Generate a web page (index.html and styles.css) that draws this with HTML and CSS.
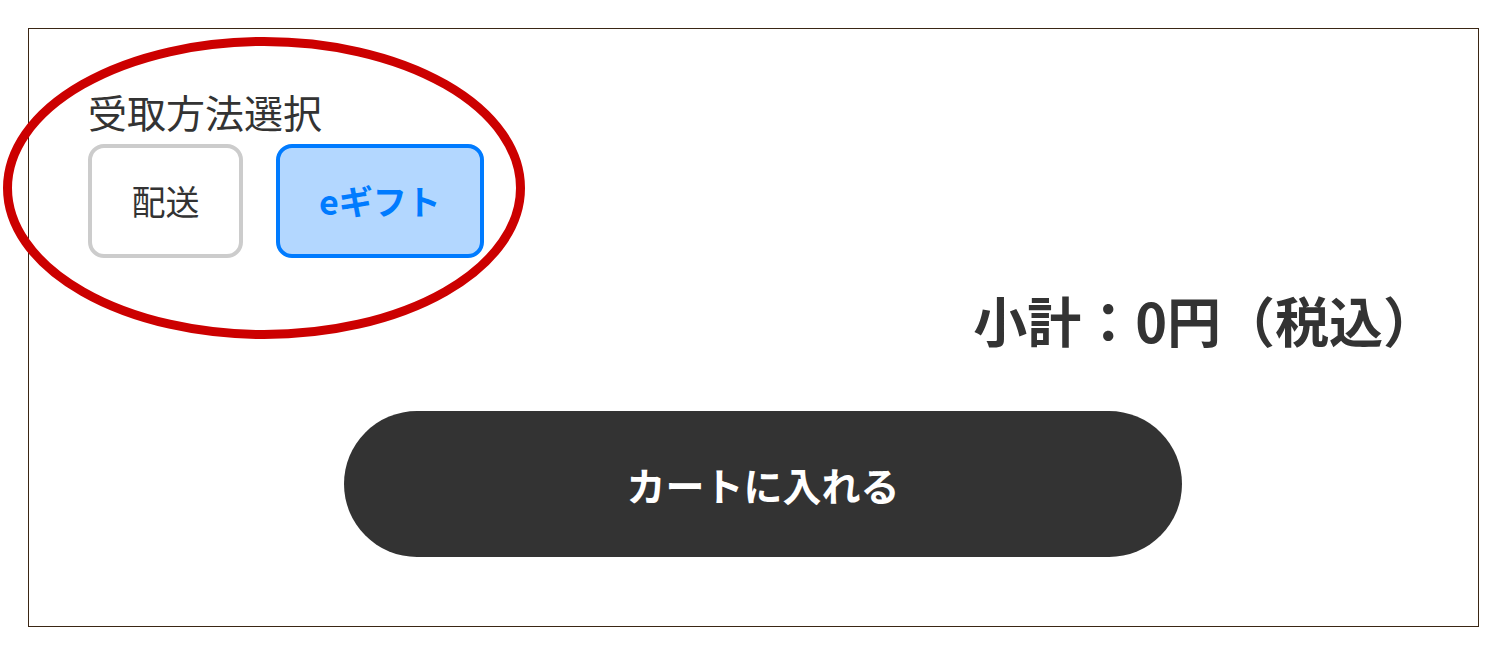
FILE: index.html
```html
<!DOCTYPE html>
<html lang="ja">
<head>
<meta charset="utf-8">
<title>受取方法選択</title>
<link rel="stylesheet" href="styles.css">
</head>
<body>
<div class="page">
  <section class="panel">
    <div class="receive">
      <div class="receive-label">受取方法選択</div>
      <div class="options">
        <button class="opt opt-ship" type="button">配送</button>
        <button class="opt opt-gift is-active" type="button">eギフト</button>
      </div>
    </div>
    <div class="subtotal">小計：0円（税込）</div>
    <div class="cart-row">
      <button class="cart-btn" type="button">カートに入れる</button>
    </div>
  </section>
  <svg class="annot" width="540" height="350" viewBox="0 0 540 350" aria-hidden="true">
    <ellipse cx="264" cy="188" rx="256.5" ry="146.5" fill="none" stroke="#cc0000" stroke-width="9"/>
  </svg>
</div>
</body>
</html>
```

FILE: styles.css
```css
* { box-sizing: border-box; }
html, body {
  margin: 0;
  padding: 0;
  background: #ffffff;
}
body {
  font-family: "Noto Sans CJK JP", "Noto Sans", sans-serif;
  color: #333333;
}
.page {
  position: relative;
  width: 1500px;
  height: 654px;
  padding: 28px 0 0 28px;
}
.panel {
  width: 1451px;
  height: 599px;
  border: 1px solid #3a2614;
  padding: 59px 41px 0 59px;
  display: flex;
  flex-direction: column;
}
.receive-label {
  font-size: 39px;
  line-height: 46px;
  font-weight: 400;
  color: #333;
}
.options {
  display: flex;
  gap: 33px;
  margin-top: 10px;
}
.opt {
  height: 114px;
  border-radius: 16px;
  font-family: inherit;
  font-size: 34px;
  line-height: 1;
  padding: 0;
  display: flex;
  align-items: center;
  justify-content: center;
  cursor: pointer;
}
.opt-ship {
  width: 155px;
  border: 4px solid #cccccc;
  background: #ffffff;
  color: #333333;
  font-weight: 400;
}
.opt-gift {
  width: 208px;
  border: 4px solid #007bff;
  background: #b3d7ff;
  color: #007bff;
  font-weight: 700;
}
.subtotal {
  align-self: flex-end;
  margin-top: 30px;
  font-size: 54px;
  line-height: 64px;
  font-weight: 700;
  color: #333;
}
.cart-row {
  display: flex;
  margin-top: 59px;
  padding-left: 256px;
}
.cart-btn {
  width: 838px;
  height: 146px;
  border: none;
  border-radius: 73px;
  background: #333333;
  color: #ffffff;
  font-family: inherit;
  font-size: 39px;
  font-weight: 700;
  cursor: pointer;
}
.annot {
  position: absolute;
  left: 0;
  top: 0;
  pointer-events: none;
}
```
